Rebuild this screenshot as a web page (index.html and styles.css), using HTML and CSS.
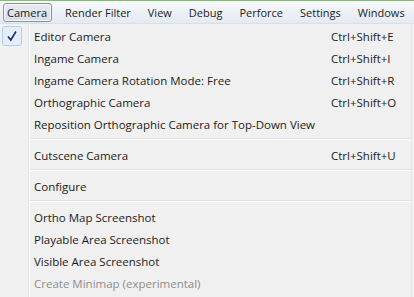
FILE: index.html
```html
<!doctype html>
<html lang="en">
<head>
  <meta charset="utf-8">
  <title>Camera menu</title>
  <link rel="stylesheet" href="styles.css">
</head>
<body>
  <div class="menubar">
    <span class="top active">Camera</span>
    <span class="top">Render Filter</span>
    <span class="top">View</span>
    <span class="top">Debug</span>
    <span class="top">Perforce</span>
    <span class="top">Settings</span>
    <span class="top">Windows</span>
  </div>

  <div class="menu">
    <div class="item">
      <span class="check">
        <svg width="12" height="12" viewBox="0 0 12 12"><path d="M2 6.5 L4.8 10 L10 1.5" fill="none" stroke="#1c2a78" stroke-width="1.6"/></svg>
      </span>
      <span class="label">Editor Camera</span><span class="key">Ctrl+Shift+E</span>
    </div>
    <div class="item"><span class="label">Ingame Camera</span><span class="key">Ctrl+Shift+I</span></div>
    <div class="item"><span class="label">Ingame Camera Rotation Mode: Free</span><span class="key">Ctrl+Shift+R</span></div>
    <div class="item"><span class="label">Orthographic Camera</span><span class="key">Ctrl+Shift+O</span></div>
    <div class="item"><span class="label">Reposition Orthographic Camera for Top-Down View</span></div>
    <div class="sep"></div>
    <div class="item"><span class="label">Cutscene Camera</span><span class="key">Ctrl+Shift+U</span></div>
    <div class="sep"></div>
    <div class="item"><span class="label">Configure</span></div>
    <div class="sep"></div>
    <div class="item"><span class="label">Ortho Map Screenshot</span></div>
    <div class="item"><span class="label">Playable Area Screenshot</span></div>
    <div class="item"><span class="label">Visible Area Screenshot</span></div>
    <div class="item disabled"><span class="label">Create Minimap (experimental)</span></div>
  </div>
</body>
</html>
```

FILE: styles.css
```css
body {
  margin: 0;
  background: #f0f0f0;
  font-family: "Open Sans", sans-serif;
  font-size: 11.5px;
  color: #1b1b1b;
  width: 414px;
  height: 297px;
  overflow: hidden;
}

.menubar {
  display: flex;
  height: 22px;
  padding: 0 0 0 3px;
  gap: 9px;
  border-top: 1px solid #7fbf6f;
  background: linear-gradient(#f7f9fc, #e4eaf2);
  border-bottom: 1px solid #d9dfe8;
  align-items: center;
  white-space: nowrap;
  font-size: 11px;
}

.top {
  padding: 0 3px;
  height: 19px;
  line-height: 17px;
  box-sizing: border-box;
  border: 1px solid transparent;
}

.top.active {
  padding: 0 4px 0 3px;
  border-color: #8a929c;
  border-radius: 3px;
  background: linear-gradient(#e6ebf1, #d8dee7);
  box-shadow: inset 0 0 0 1px #f4f7fa;
}

.menu {
  position: relative;
  width: 411px;
  border-right: 1px solid #e4e8f0;
  padding-top: 1px;
  min-height: 275px;
  background: linear-gradient(to right, #f1f1f1 0, #f1f1f1 28px, #e2e3e3 28px, #e2e3e3 29px, #ffffff 29px, #ffffff 30px, #f0f0f0 30px);
}

.item {
  display: flex;
  align-items: center;
  height: 22px;
  padding-left: 34px;
  position: relative;
  white-space: nowrap;
}

.label {
  flex: 1;
}

.key {
  width: 80px;
}

.disabled {
  color: #8d8d8d;
}

.check {
  position: absolute;
  left: 2px;
  top: 1px;
  width: 18px;
  height: 18px;
  border: 1px solid #aecff7;
  border-radius: 3px;
  background: #e4eefa;
  display: flex;
  align-items: center;
  justify-content: center;
}

.sep {
  margin: 3px 0 4px 30px;
  height: 0;
  border-top: 1px solid #e0e0e0;
  border-bottom: 1px solid #ffffff;
}
```
